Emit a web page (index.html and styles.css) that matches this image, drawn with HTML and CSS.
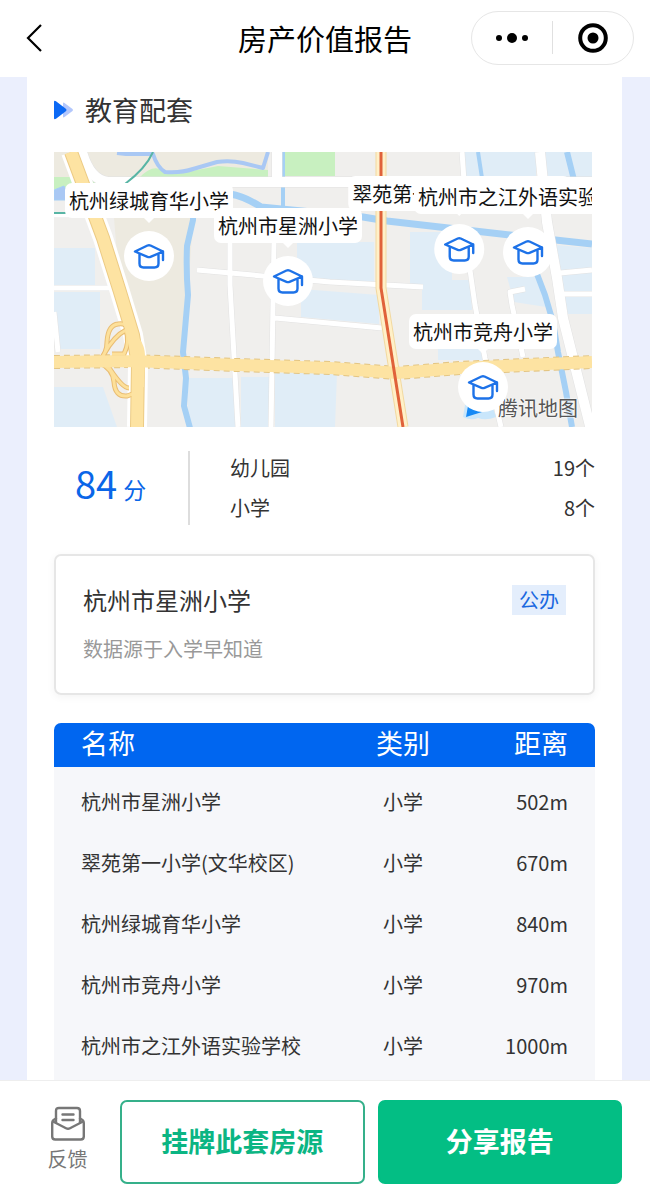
FILE: index.html
```html
<!DOCTYPE html>
<html lang="zh-CN">
<head>
    <meta charset="UTF-8">
    <meta name="viewport" content="width=device-width, initial-scale=1.0">
    <title>房产价值报告</title>
    <link rel="stylesheet" href="styles.css">
</head>
<body>

    <!-- 学校图标 -->
    <svg class="sprite" aria-hidden="true">
        <symbol id="cap" viewBox="0 0 32 28">
            <path d="M2 9.500L14.500 3.500Q16 2.900 17.500 3.500L30 9.500L17.500 14.800Q16 15.400 14.500 14.800Z M6.500 12V21.500Q6.500 25.500 10.500 25.500H21.500Q25.500 25.500 25.500 21.500V12 M30 9.500V18" fill="none" stroke="#1d72e8" stroke-width="2.400" stroke-linejoin="round" stroke-linecap="round"/>
        </symbol>
    </svg>

    <header class="navbar">
        <button type="button" class="back" aria-label="返回">
            <svg width="20" height="30" viewBox="0 0 20 30"><path d="M17 2L4 15L17 28" fill="none" stroke="#000" stroke-width="2.200"/></svg>
        </button>
        <h1>房产价值报告</h1>
        <div class="capsule">
            <button type="button" aria-label="更多">
                <svg width="34" height="12" viewBox="0 0 34 12"><circle cx="4" cy="6" r="3"/><circle cx="17" cy="6" r="5"/><circle cx="30" cy="6" r="3"/></svg>
            </button>
            <button type="button" aria-label="关闭">
                <svg width="32" height="32" viewBox="0 0 32 32"><circle cx="16" cy="16" r="12.800" fill="none" stroke="#000" stroke-width="4"/><circle cx="16" cy="16" r="5.500"/></svg>
            </button>
        </div>
    </header>

    <main class="report">
        <h2 class="section-title">
            <svg width="20" height="20" viewBox="0 0 20 20"><path d="M9 3.500Q9 2 10.500 3L18.500 9Q19.500 10 18.500 11L10.500 17Q9 18 9 16.500Z" fill="#b3c7fc"/><path d="M0 2Q0 0 2 1.200L11.500 8.500Q13.500 10 11.500 11.500L2 18.800Q0 20 0 18Z" fill="#0b69f5"/></svg>
            教育配套
        </h2>

        <div class="map">
            <svg class="map-base" viewBox="0 0 538 275" preserveAspectRatio="xMidYMid slice">
                <rect width="538" height="275" fill="#f0efed"/>
                <!-- 地块 -->
                <path d="M0 0H214V24H120L90 30L0 26Z M60 66H139L130 206H92L66 140Z" fill="#edeae0"/>
                <g fill="#e0edf7">
                    <path d="M0 96H41V133H0Z M0 140H46V197H4L0 180Z M0 235H49L63 275H0Z M134 226H181V275H134Z M187 225H215V275H187Z M221 221H283L281 275H221Z"/>
                    <path d="M243 90H320V132L243 126Z M247 137L325 143V172L247 165Z M356 80H398V128H416L418 158H368V134H356Z M410 0H482V28H410Z M490 0H538V27H492Z M501 93L538 96V162H513Z M384 192H430V208H384Z M453 125H484L492 155L460 150Z"/>
                </g>
                <g fill="#c8f0c0">
                    <path d="M0 25H42V37H0Z M28 0L35 15L54 27H30Z M85 26Q98 12 108 18L116 22Q145 18 164 14L214 18V25Z M231 0H281V24H231Z"/>
                </g>
                <!-- 河流 -->
                <g fill="none" stroke="#a5d0f5" stroke-linejoin="round">
                    <path d="M63 1L72 2L99 2Q103 15 111 20Q128 21 139 17L163 10Q176 8 189 11L209 16L214 0" stroke="#a9c8f4" stroke-width="4"/>
                    <path d="M0 38L10 34L18 48L0 48Z" fill="#a9c8f4"/>
                    <path d="M139 60V68L133 94Q132 120 134 143L129 200L132 226L130 254L136 276" stroke-width="6"/>
                    <path d="M176 42Q190 44 207 55L309 65L333 69L456 83L538 92" stroke-width="7"/>
                    <path d="M229 0V60 M424 0L428 26" stroke-width="4"/>
                    <path d="M513 0L520 28 M483 122L491 143L499 170L504 200L512 240L518 275" stroke-width="6"/>
                </g>
                <!-- 街道 -->
                <g fill="none" stroke="#e2e2e2" stroke-linejoin="round">
                    <path d="M28 0Q36 28 54 30H538 M223 0V30 M486 0L493 70L503 126L509 166L537 278" stroke-width="11"/>
                    <path d="M176 90V133L184 275 M220 90L217 275 M143 118L276 130L369 135 M221 166L328 176 M0 136H59 M0 160L4 200 M0 63H50 M408 0L410 29 M416 118L421 153L431 206L447 275 M471 137L456 140L458 153L469 205 M506 121L538 118 M509 142H538" stroke-width="6"/>
                </g>
                <g fill="none" stroke="#fff" stroke-linejoin="round">
                    <path d="M28 0Q36 28 54 30H538 M223 0V30 M486 0L493 70L503 126L509 166L537 278" stroke-width="10"/>
                    <path d="M176 90V133L184 275 M220 90L217 275 M143 118L276 130L369 135 M221 166L328 176 M0 136H59 M0 160L4 200 M0 63H50 M408 0L410 29 M416 118L421 153L431 206L447 275 M471 137L456 140L458 153L469 205 M506 121L538 118 M509 142H538" stroke-width="5"/>
                </g>
                <path d="M99 0Q92 16 71 32 M0 61H12" fill="none" stroke="#58b5a5" stroke-width="2"/>
                <!-- 主干道和立交 -->
                <g fill="none">
                    <path d="M0 210L79 209L183 213L276 216L343 221L406 216L538 210" stroke="#e3c583" stroke-width="14" stroke-dasharray="6 4"/>
                    <path d="M327 0V136L349 275" stroke="#f2d9a0" stroke-width="11"/>
                    <path d="M327 0V136L349 275" stroke="#fff0c8" stroke-width="9"/>
                    <path d="M17 0L49 86L66 140L79 183L84 213L83 275" stroke="#fff" stroke-width="20"/>
                    <path d="M17 0L49 86L66 140L79 183L84 213L83 275" stroke="#eccb85" stroke-width="14"/>
                    <path d="M45 208Q53 202 53 190Q54 173 64 172Q74 170 75 182 M50 202Q60 184 72 178Q76 190 70 202H58 M46 211Q59 217 60 230Q61 245 73 244L84 240 M54 214Q68 236 75 236" stroke="#e9bd73" stroke-width="5"/>
                    <path d="M45 208Q53 202 53 190Q54 173 64 172Q74 170 75 182 M50 202Q60 184 72 178Q76 190 70 202H58 M46 211Q59 217 60 230Q61 245 73 244L84 240 M54 214Q68 236 75 236" stroke="#fde09a" stroke-width="3"/>
                    <path d="M0 210L79 209L183 213L276 216L343 221L406 216L538 210 M17 0L49 86L66 140L79 183L84 213L83 275" stroke="#fde3a2" stroke-width="12"/>
                    <path d="M76 183Q89 190 88 208L87 235" stroke="#fde3a2" stroke-width="6"/>
                    <path d="M327 0V136L349 275" stroke="#e0623a" stroke-width="3"/>
                </g>
            </svg>

            <div class="map-brand">
                <svg width="36" height="26" viewBox="0 0 36 26"><path d="M4 4H28L34 22Q24 26 16 23Q9 26 1 22Z" fill="#c9e6fb"/><path d="M6 11L20 17L4 22Z" fill="#1689f5"/></svg>
                <span>腾讯地图</span>
            </div>

            <div class="pin pin-yuhua">
                <span class="pin-label">杭州绿城育华小学</span>
                <span class="pin-dot"><svg width="32" height="28"><use href="#cap"/></svg></span>
            </div>
            <div class="pin pin-xingzhou">
                <span class="pin-label">杭州市星洲小学</span>
                <span class="pin-dot"><svg width="32" height="28"><use href="#cap"/></svg></span>
            </div>
            <div class="pin pin-cuiyuan">
                <span class="pin-label">翠苑第一小学(文华校区)</span>
                <span class="pin-dot"><svg width="32" height="28"><use href="#cap"/></svg></span>
            </div>
            <div class="pin pin-zhijiang">
                <span class="pin-label">杭州市之江外语实验学校</span>
                <span class="pin-dot"><svg width="32" height="28"><use href="#cap"/></svg></span>
            </div>
            <div class="pin pin-jingzhou">
                <span class="pin-label">杭州市竞舟小学</span>
                <span class="pin-dot"><svg width="32" height="28"><use href="#cap"/></svg></span>
            </div>
        </div>

        <div class="summary">
            <div class="score"><strong>84</strong>分</div>
            <dl class="counts">
                <div><dt>幼儿园</dt><dd>19个</dd></div>
                <div><dt>小学</dt><dd>8个</dd></div>
            </dl>
        </div>

        <div class="school-card">
            <div class="school-head">
                <h3>杭州市星洲小学</h3>
                <span class="tag">公办</span>
            </div>
            <p>数据源于入学早知道</p>
        </div>

        <div class="table-box">
            <table>
                <thead>
                    <tr><th>名称</th><th>类别</th><th>距离</th></tr>
                </thead>
                <tbody>
                    <tr><td>杭州市星洲小学</td><td>小学</td><td>502m</td></tr>
                    <tr><td>翠苑第一小学(文华校区)</td><td>小学</td><td>670m</td></tr>
                    <tr><td>杭州绿城育华小学</td><td>小学</td><td>840m</td></tr>
                    <tr><td>杭州市竞舟小学</td><td>小学</td><td>970m</td></tr>
                    <tr><td>杭州市之江外语实验学校</td><td>小学</td><td>1000m</td></tr>
                </tbody>
            </table>
        </div>
    </main>

    <footer class="actions">
        <button type="button" class="feedback">
            <svg width="36" height="36" viewBox="0 0 36 36" fill="none" stroke="#777" stroke-width="2.400" stroke-linejoin="round" stroke-linecap="round">
                <path d="M6 12.500L3.500 14Q2.200 15 2.200 17V30.500Q2.200 33.500 5.200 33.500H30.800Q33.800 33.500 33.800 30.500V17Q33.800 15 32.500 14L30 12.500"/>
                <path d="M3 15.500L16 22.300Q18 23.300 20 22.300L33 15.500"/>
                <path d="M6 16.500V5Q6 2 9 2H27Q30 2 30 5V16.500 M12.500 8.500H23.500 M12.500 14H23.500"/>
            </svg>
            反馈
        </button>
        <button type="button" class="btn btn-outline">挂牌此套房源</button>
        <button type="button" class="btn btn-solid">分享报告</button>
    </footer>

</body>
</html>
```
FILE: styles.css
```css
* {
    box-sizing: border-box;
}
body {
    margin: 0;
    font-family: "Noto Sans CJK SC", sans-serif;
    font-size: 20px;
    color: #333;
    background-color: #ebeffd;
}
h1, h2, h3, p, dl, dd {
    margin: 0;
    font-weight: normal;
}
button {
    font-family: inherit;
    padding: 0;
    border: none;
    background: none;
    cursor: pointer;
}
svg {
    display: block;
}
.sprite {
    position: absolute;
    width: 0;
    height: 0;
}

/* 顶部导航 */
.navbar {
    display: grid;
    grid-template-columns: 1fr auto 1fr;
    align-items: center;
    height: 77px;
    padding: 0 16px 2px;
    background-color: #fff;
}
.back {
    justify-self: start;
    padding-left: 8px;
}
.navbar h1 {
    font-size: 29px;
    line-height: 42px;
    color: #000;
}
.capsule {
    justify-self: end;
    display: flex;
    align-items: center;
    width: 163px;
    height: 54px;
    border: 1px solid #e6e6e6;
    border-radius: 27px;
}
.capsule button {
    flex: 1;
    height: 33px;
    display: flex;
    align-items: center;
    justify-content: center;
}
.capsule button + button {
    border-left: 1px solid #e0e0e0;
}

/* 报告内容 */
.report {
    margin: 0 28px 0 27px;
    padding: 13px 27px 0;
    background-color: #fff;
}
.section-title {
    display: flex;
    align-items: center;
    gap: 11px;
    font-size: 27px;
    line-height: 40px;
    margin-bottom: 22px;
}
.map {
    position: relative;
    height: 275px;
    margin-right: 3px;
    overflow: hidden;
}
.map-base {
    width: 100%;
    height: 100%;
}
.map-brand {
    position: absolute;
    right: 14px;
    bottom: 4px;
    display: flex;
    align-items: center;
    line-height: 30px;
    color: #555;
    text-shadow: 0 0 2px #fff, 0 0 2px #fff;
}
.pin {
    position: absolute;
    display: flex;
    flex-direction: column;
    align-items: center;
    gap: 13px;
    transform: translateX(-50%);
}
.pin-label {
    position: relative;
    padding: 0 4px;
    line-height: 35px;
    white-space: nowrap;
    color: #111;
    background-color: #fff;
    border-radius: 7px;
}
.pin-label::after {
    content: "";
    position: absolute;
    top: 100%;
    left: 50%;
    margin-left: -5px;
    border: 5px solid transparent;
    border-top-color: #fff;
    border-bottom: none;
}
.pin-dot {
    display: flex;
    align-items: center;
    justify-content: center;
    width: 50px;
    height: 50px;
    border-radius: 50%;
    background-color: #fff;
}
.pin-yuhua {
    left: 95px;
    top: 31px;
}
.pin-xingzhou {
    left: 234px;
    top: 56px;
}
.pin-cuiyuan {
    left: 405px;
    top: 24px;
}
.pin-zhijiang {
    left: 474px;
    top: 27px;
}
.pin-jingzhou {
    left: 429px;
    top: 162px;
}

/* 评分 */
.summary {
    display: flex;
    align-items: center;
    padding-top: 21px;
}
.score {
    width: 136px;
    height: 74px;
    padding-left: 21px;
    line-height: 64px;
    font-size: 23px;
    color: #0a66e8;
    border-right: 2px solid #ddd;
}
.score strong {
    font-size: 38px;
    font-weight: normal;
    margin-right: 6px;
}
.counts {
    flex: 1;
    padding-left: 40px;
}
.counts div {
    display: flex;
    justify-content: space-between;
    line-height: 40px;
}

.school-card {
    margin-top: 26px;
    padding: 26px 27px 29px;
    border: 2px solid #e6e6e6;
    border-radius: 7px;
    box-shadow: 0 2px 8px rgba(0, 0, 0, 0.05);
}
.school-head {
    display: flex;
    align-items: center;
    justify-content: space-between;
}
.school-head h3 {
    font-size: 24px;
    line-height: 36px;
}
.tag {
    padding: 0 7px;
    line-height: 30px;
    color: #1a68e0;
    background-color: #e4eefc;
}
.school-card p {
    margin-top: 16px;
    line-height: 30px;
    color: #999;
}

/* 学校列表 */
.table-box {
    margin-top: 28px;
    padding-bottom: 4px;
    border-radius: 7px 7px 0 0;
    overflow: hidden;
    background-color: #f6f7fa;
}
table {
    width: 100%;
    table-layout: fixed;
    border-collapse: collapse;
}
th {
    height: 44px;
    padding: 0 0 4px;
    font-size: 27px;
    font-weight: normal;
    line-height: 40px;
    color: #fff;
    background-color: #0066f0;
}
td {
    height: 61px;
    padding: 0;
    text-align: center;
}
tbody::before {
    content: "";
    display: table-row;
    height: 4px;
}
th:first-child,
td:first-child {
    width: 53%;
    padding-left: 27px;
    text-align: left;
}
th:nth-child(2) {
    width: 23%;
}
th:last-child,
td:last-child {
    padding-right: 27px;
    text-align: right;
}

/* 底部操作栏 */
.actions {
    position: sticky;
    bottom: 0;
    display: flex;
    align-items: center;
    gap: 13px;
    padding: 19px 28px 3px;
    border-top: 1px solid #eee;
    background-color: #fff;
}
.feedback {
    display: flex;
    flex-direction: column;
    align-items: center;
    gap: 2px;
    width: 79px;
    padding-bottom: 4px;
    font-size: 20px;
    line-height: 30px;
    color: #777;
}
.btn {
    flex: 1;
    height: 84px;
    padding-bottom: 4px;
    font-size: 27px;
    font-weight: bold;
    border: 2px solid #03be84;
    border-radius: 7px;
}
.btn-outline {
    color: #0bb583;
    background-color: #fff;
    border-color: #35b08a;
}
.btn-solid {
    color: #fff;
    background-color: #03be84;
}
```
